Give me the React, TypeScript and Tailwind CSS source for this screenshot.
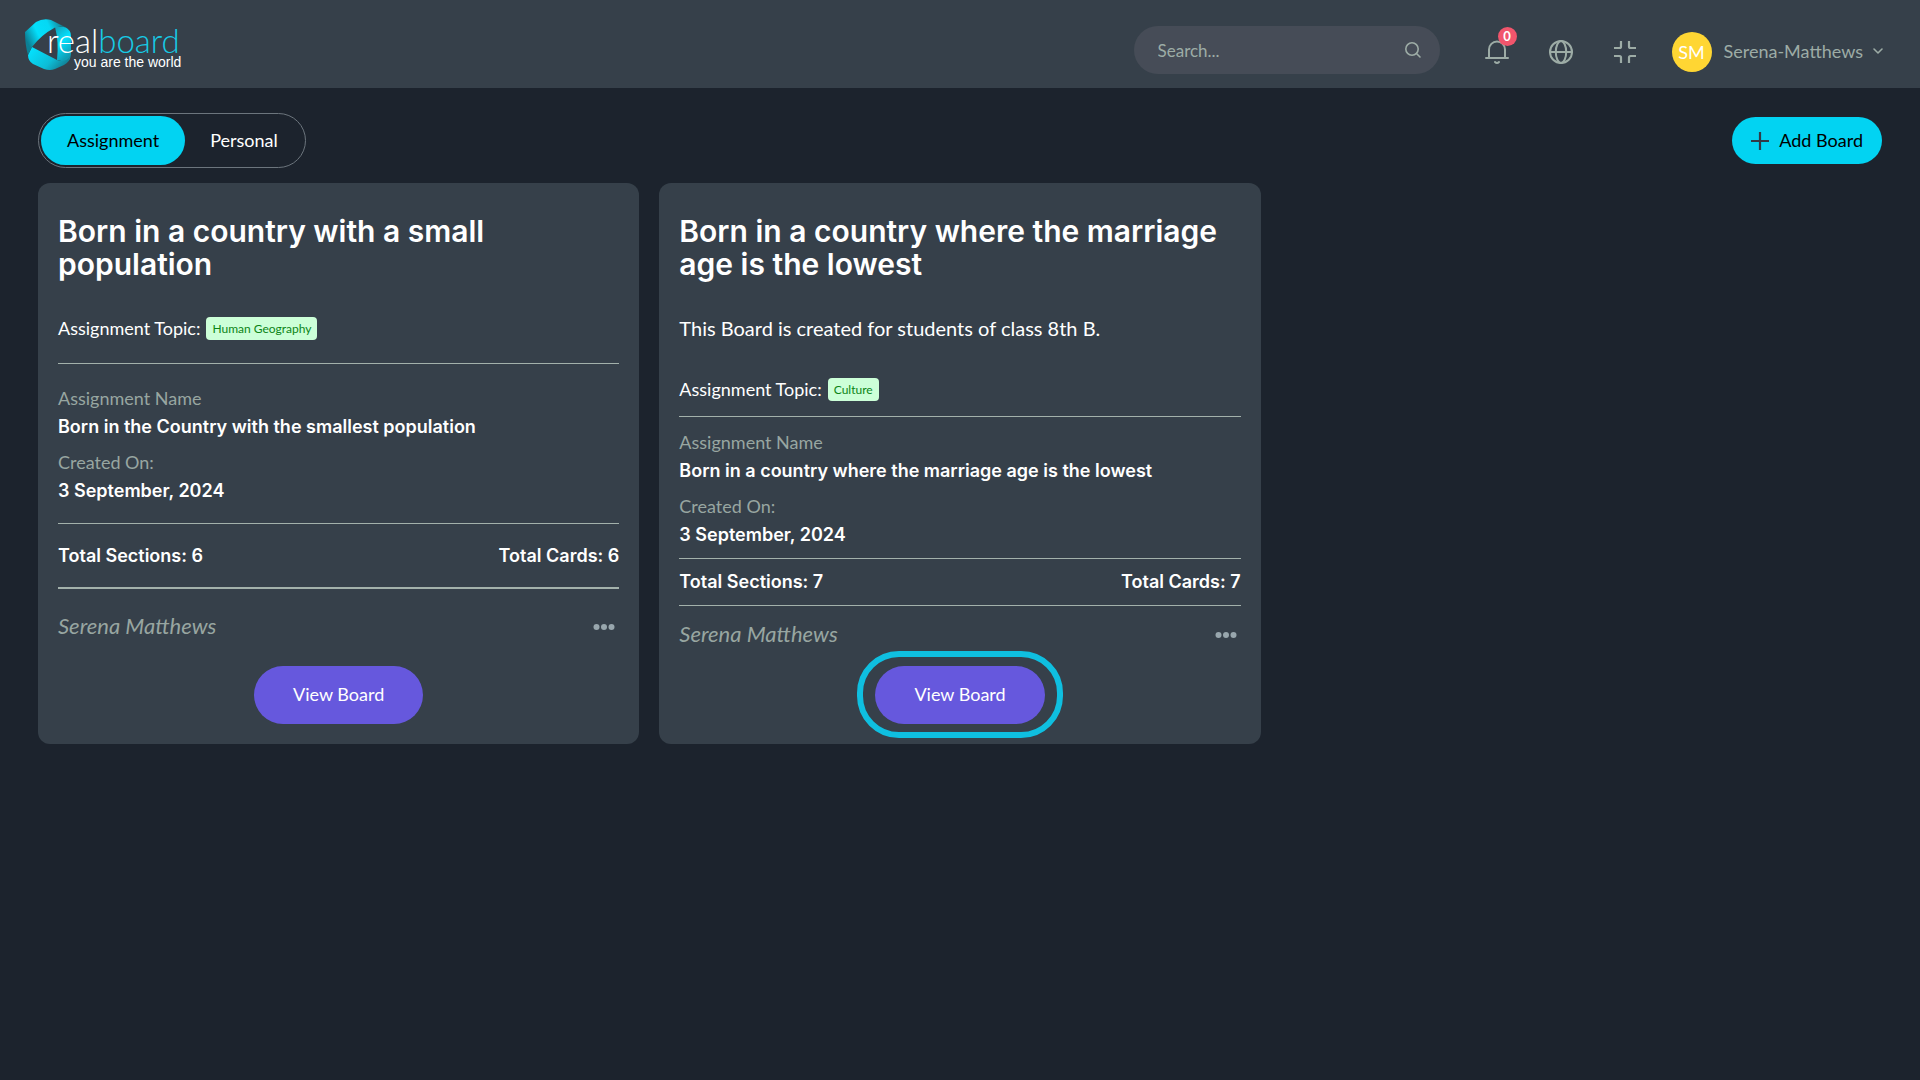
import React from "react";

const body = "font-[Lato,'Noto_Sans',sans-serif]";
const display = "font-[Inter,'Noto_Sans',sans-serif]";

function Logo() {
  return (
    <a href="#" aria-label="realboard, you are the world" className="mt-1 block shrink-0">
      <svg width="160" height="56" viewBox="0 0 160 56" role="img" aria-hidden="true">
        <defs>
          <linearGradient id="top" x1="0" y1="0.5" x2="1" y2="0.1">
            <stop offset="0" stopColor="#0c7f94" />
            <stop offset="0.3" stopColor="#03dffb" />
            <stop offset="0.6" stopColor="#05d8f4" />
            <stop offset="1" stopColor="#1c5967" />
          </linearGradient>
          <linearGradient id="right" x1="0" y1="0" x2="0.4" y2="1">
            <stop offset="0" stopColor="#129fb7" />
            <stop offset="0.5" stopColor="#03e2ff" />
            <stop offset="1" stopColor="#0f9db5" />
          </linearGradient>
          <linearGradient id="bottom" x1="0" y1="0.2" x2="1" y2="0.7">
            <stop offset="0" stopColor="#03e2ff" />
            <stop offset="0.6" stopColor="#0dbcd6" />
            <stop offset="1" stopColor="#13788c" />
          </linearGradient>
        </defs>
        <path d="M31 9 L41 9 Q47 12 47 18 L47 36 Q46 44 42 44 L33 42 Q35 24 31 9Z" fill="url(#right)" />
        <path d="M8 29 L33 42 Q42 45 46 38 Q46 44 40 47 L31 51 Q26 53 20 51 L9 46 Q4 43 4 37Z" fill="url(#bottom)" />
        <path d="M1 14 L12 4 Q19 0 27 2 L43 10 Q37 8 31 9.500 Q17 17 8 29 L4 37 Q1 27 1 14Z" fill="url(#top)" />
        <text x="23" y="35" fontSize="33" fontWeight="300" fontFamily="Lato, sans-serif" fill="#ffffff">
          real<tspan fill="#16cbe6">board</tspan>
        </text>
        <text x="50" y="49" fontSize="14" fontFamily="'Liberation Sans', Arial, sans-serif" fill="#ffffff">
          you are the world
        </text>
      </svg>
    </a>
  );
}

const stroke = {
  fill: "none",
  stroke: "currentColor",
  strokeLinecap: "round" as const,
  strokeLinejoin: "round" as const,
};

function SearchIcon() {
  return (
    <svg width="18" height="18" viewBox="0 0 18 18" strokeWidth="1.6" {...stroke} aria-hidden="true">
      <circle cx="8" cy="8" r="6.2" />
      <path d="M12.5 12.5 L16 16" />
    </svg>
  );
}

function BellIcon() {
  return (
    <svg width="26" height="26" viewBox="0 0 26 26" strokeWidth="2" {...stroke} aria-hidden="true">
      <path d="M5 19 V10.5 a8 8 0 0 1 16 0 V19" />
      <path d="M2 19 H24" />
      <path d="M11 23 Q13 25 15 23" />
    </svg>
  );
}

function GlobeIcon() {
  return (
    <svg width="26" height="26" viewBox="0 0 26 26" strokeWidth="2" {...stroke} aria-hidden="true">
      <circle cx="13" cy="13" r="11" />
      <ellipse cx="13" cy="13" rx="5.2" ry="11" />
      <path d="M2 13 H24" />
    </svg>
  );
}

function CollapseIcon() {
  return (
    <svg width="26" height="26" viewBox="0 0 26 26" strokeWidth="2.2" {...stroke} strokeLinecap="butt" aria-hidden="true">
      <path d="M9 2 V7.5 Q9 9 7.500 9 H2" />
      <path d="M17 2 V7.5 Q17 9 18.500 9 H24" />
      <path d="M2 17 H7.5 Q9 17 9 18.500 V24" />
      <path d="M24 17 H18.5 Q17 17 17 18.500 V24" />
    </svg>
  );
}

function Header() {
  return (
    <header className="flex h-[88px] items-center justify-between bg-[#36404a] pr-9 pl-6 text-[#9daca6]">
      <Logo />
      <div className="flex items-center">
        <label className="mt-3 flex h-12 w-[306px] items-center rounded-full bg-[#464c57] pr-[18px] pl-6">
          <span className="sr-only">Search</span>
          <input
            type="text"
            placeholder="Search..."
            className="h-full min-w-0 flex-1 bg-transparent text-[17px] outline-none placeholder:text-[#9daca6]"
          />
          <SearchIcon />
        </label>
        <button type="button" aria-label="Notifications" className="relative mt-4 ml-[44px]">
          <BellIcon />
          <span className="absolute -top-3 left-[14px] flex size-[19px] items-center justify-center rounded-full bg-[#f1556c] text-[13px] font-bold text-white">
            0
          </span>
        </button>
        <button type="button" aria-label="Language" className="mt-4 ml-[38px]">
          <GlobeIcon />
        </button>
        <button type="button" aria-label="Exit full screen" className="mt-4 ml-[38px]">
          <CollapseIcon />
        </button>
        <button type="button" className="mt-4 ml-[34px] flex items-center text-lg">
          <span className="flex size-10 items-center justify-center rounded-full bg-[#ffd633] text-white">SM</span>
          <span className="ml-3 pb-0.5">Serena-Matthews</span>
          <svg width="12" height="12" viewBox="0 0 12 12" strokeWidth="1.6" {...stroke} className="mb-0.5 ml-[9px]" aria-hidden="true">
            <path d="M2 4 L6 8 L10 4" />
          </svg>
        </button>
      </div>
    </header>
  );
}

type Board = {
  title: string;
  description?: string;
  topic: string;
  assignment: string;
  created: string;
  sections: number;
  cards: number;
  highlighted?: boolean;
};

const boards: Board[] = [
  {
    title: "Born in a country with a small population",
    topic: "Human Geography",
    assignment: "Born in the Country with the smallest population",
    created: "3 September, 2024",
    sections: 6,
    cards: 6,
  },
  {
    title: "Born in a country where the marriage age is the lowest",
    description: "This Board is created for students of class 8th B.",
    topic: "Culture",
    assignment: "Born in a country where the marriage age is the lowest",
    created: "3 September, 2024",
    sections: 7,
    cards: 7,
    highlighted: true,
  },
];

function Field({ label, value }: { label: string; value: string }) {
  return (
    <div>
      <dt className="text-lg leading-7 text-[#98a6a1]">{label}</dt>
      <dd className={`pt-px text-lg leading-7 font-semibold text-white ${display}`}>{value}</dd>
    </div>
  );
}

function BoardCard({ board }: { board: Board }) {
  const compact = Boolean(board.description);
  return (
    <article className="flex flex-col rounded-xl bg-[#36404a] px-5 pt-8 pb-5">
      <h2 className={`text-[30px] leading-[33px] font-semibold text-white ${display}`}>{board.title}</h2>
      {board.description && <p className="mt-[33px] text-[20px] leading-7 text-white">{board.description}</p>}
      <p className={`mt-[35px] flex h-6 items-center gap-1.5 text-lg text-white ${compact ? "mb-[15px]" : "mb-[23px]"}`}>
        Assignment Topic:
        <span className="rounded bg-[#ccffd8] px-1.5 text-xs leading-[23px] text-[#0b8416]">{board.topic}</span>
      </p>
      <dl className={`flex flex-col gap-[7px] border-t border-[#a3b1ab] ${compact ? "pt-[11px] pb-[9px]" : "pt-5 pb-[18px]"}`}>
        <Field label="Assignment Name" value={board.assignment} />
        <Field label="Created On:" value={board.created} />
      </dl>
      <div
        className={`flex justify-between border-t border-[#a3b1ab] text-lg leading-7 font-semibold text-white ${display} ${
          compact ? "border-b py-[9px]" : "border-b-2 pt-[18px] pb-[17px]"
        }`}
      >
        <span>Total Sections: {board.sections}</span>
        <span>Total Cards: {board.cards}</span>
      </div>
      <div className={`flex items-center justify-between text-[#98a6a1] ${compact ? "mt-3.5" : "mt-[23px]"}`}>
        <em className="text-[22px] leading-7">Serena Matthews</em>
        <button type="button" aria-label="Board options" className="mt-0.5 mr-1">
          <svg width="22" height="8" viewBox="0 0 22 8" fill="#98a6ad" aria-hidden="true">
            <circle cx="3.5" cy="4" r="3" />
            <circle cx="11" cy="4" r="3" />
            <circle cx="18.5" cy="4" r="3" />
          </svg>
        </button>
      </div>
      <div className={`relative self-center ${compact ? "mt-[18px]" : "mt-[26px]"}`}>
        <button type="button" className="h-[58px] rounded-full bg-[#6658dd] px-[39px] pb-0.5 text-lg text-white">
          View Board
        </button>
        {board.highlighted && (
          <span className="pointer-events-none absolute -inset-x-[18px] -top-[15px] -bottom-3.5 rounded-[42px] border-[6px] border-[#0fbfe0]" />
        )}
      </div>
    </article>
  );
}

export default function App() {
  return (
    <div className={`min-h-screen bg-[#1c232d] ${body}`}>
      <Header />
      <main className="px-[38px] pt-[25px]">
        <div className="flex items-center justify-between">
          <div className="flex h-[55px] items-center rounded-full border border-[#6c757d] p-0.5 text-lg">
            <button type="button" aria-pressed="true" className="h-[49px] rounded-full bg-[#02d3f2] px-[26px] pb-0.5 text-black">
              Assignment
            </button>
            <button type="button" aria-pressed="false" className="h-[49px] rounded-full px-[25px] pb-0.5 text-white">
              Personal
            </button>
          </div>
          <button type="button" className="flex h-[47px] items-center gap-2.5 rounded-full bg-[#02d3f2] px-[19px] text-lg text-black">
            <svg width="18" height="18" viewBox="0 0 18 18" stroke="#323a46" strokeWidth="2.2" fill="none" aria-hidden="true">
              <path d="M9 0 V18 M0 9 H18" />
            </svg>
            <span className="pb-0.5">Add Board</span>
          </button>
        </div>
        <section className="mt-[15px] grid grid-cols-3 gap-5">
          {boards.map((board) => (
            <BoardCard key={board.title} board={board} />
          ))}
        </section>
      </main>
    </div>
  );
}
